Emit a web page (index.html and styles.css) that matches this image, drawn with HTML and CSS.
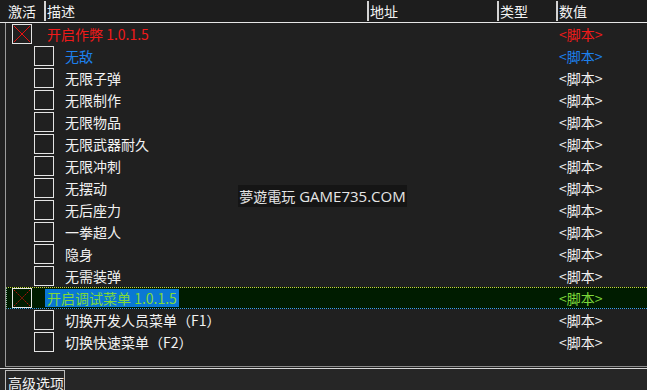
FILE: index.html
```html
<!DOCTYPE html>
<html lang="zh-CN">
<head>
<meta charset="UTF-8">
<title>Cheat Table</title>
<link rel="stylesheet" href="styles.css">
</head>
<body>

<div class="app">
  <div class="header">
    <div class="hcell first">激活</div>
    <div class="hcell">描述</div>
    <div class="hcell">地址</div>
    <div class="hcell">类型</div>
    <div class="hcell last">数值</div>
  </div>

  <div class="list">
    <div class="row parent">
      <div class="desc">
        <span class="box"><svg viewBox="0 0 20 20"><line x1="1" y1="1" x2="19" y2="19"/><line x1="19" y1="1" x2="1" y2="19"/></svg></span>
        <span class="label red">开启作弊 1.0.1.5</span>
      </div>
      <div class="value red">&lt;脚本&gt;</div>
    </div>
    <div class="row child">
      <div class="desc"><span class="box"></span><span class="label blue">无敌</span></div>
      <div class="value blue">&lt;脚本&gt;</div>
    </div>
    <div class="row child">
      <div class="desc"><span class="box"></span><span class="label">无限子弹</span></div>
      <div class="value">&lt;脚本&gt;</div>
    </div>
    <div class="row child">
      <div class="desc"><span class="box"></span><span class="label">无限制作</span></div>
      <div class="value">&lt;脚本&gt;</div>
    </div>
    <div class="row child">
      <div class="desc"><span class="box"></span><span class="label">无限物品</span></div>
      <div class="value">&lt;脚本&gt;</div>
    </div>
    <div class="row child">
      <div class="desc"><span class="box"></span><span class="label">无限武器耐久</span></div>
      <div class="value">&lt;脚本&gt;</div>
    </div>
    <div class="row child">
      <div class="desc"><span class="box"></span><span class="label">无限冲刺</span></div>
      <div class="value">&lt;脚本&gt;</div>
    </div>
    <div class="row child">
      <div class="desc"><span class="box"></span><span class="label">无摆动</span></div>
      <div class="value">&lt;脚本&gt;</div>
    </div>
    <div class="row child">
      <div class="desc"><span class="box"></span><span class="label">无后座力</span></div>
      <div class="value">&lt;脚本&gt;</div>
    </div>
    <div class="row child">
      <div class="desc"><span class="box"></span><span class="label">一拳超人</span></div>
      <div class="value">&lt;脚本&gt;</div>
    </div>
    <div class="row child">
      <div class="desc"><span class="box"></span><span class="label">隐身</span></div>
      <div class="value">&lt;脚本&gt;</div>
    </div>
    <div class="row child">
      <div class="desc"><span class="box"></span><span class="label">无需装弹</span></div>
      <div class="value">&lt;脚本&gt;</div>
    </div>
    <div class="row parent selected">
      <div class="desc">
        <span class="box"><svg viewBox="0 0 20 20"><line class="dash" x1="1" y1="1" x2="19" y2="19"/><line class="dash" x1="19" y1="1" x2="1" y2="19"/></svg></span>
        <span class="label green sel-text">开启调试菜单 1.0.1.5</span>
      </div>
      <div class="value green">&lt;脚本&gt;</div>
    </div>
    <div class="row child">
      <div class="desc"><span class="box"></span><span class="label">切换开发人员菜单（F1）</span></div>
      <div class="value">&lt;脚本&gt;</div>
    </div>
    <div class="row child">
      <div class="desc"><span class="box"></span><span class="label">切换快速菜单（F2）</span></div>
      <div class="value">&lt;脚本&gt;</div>
    </div>
  </div>

  <div class="bottom">
    <div class="tab">高级选项</div>
  </div>

  <!-- site watermark laid over the list -->
  <div class="watermark"><span class="tc">夢遊電玩</span> GAME735.COM</div>
</div>

</body>
</html>
```

FILE: styles.css
```css
/* dark cheat table list */
body {
  margin: 0;
  padding: 0;
  background-color: #202020;
  font-family: "Noto Sans CJK SC", "Noto Sans", sans-serif;
  color: #f2f2f2;
}
.app {
  position: relative;
  width: 647px;
  height: 390px;
  overflow: hidden;
  display: flex;
  flex-direction: column;
}

/* column header */
.header {
  display: grid;
  grid-template-columns: 46px 323px 130px 59px 1fr;
  height: 22px;
  border-bottom: 1px solid #e6e6e6;
  background-color: #1d1d1d;
}
.hcell {
  box-sizing: border-box;
  border-right: 2px solid #d4d4d4;
  margin: 1px 0 1px 0;
  padding-left: 1px;
  font-size: 14px;
  line-height: 20px;
  white-space: nowrap;
}
.hcell.first {
  padding-left: 8px;
}
.hcell.last {
  border-right: none;
}

/* rows */
.list {
  height: 350px;
  margin-left: 5px;
  border-left: 1px solid #9c9c9c;
  border-bottom: 1px solid #8c8c8c;
}
.row {
  display: grid;
  grid-template-columns: 552px 1fr;
  height: 22px;
  box-sizing: border-box;
  border: 1px solid transparent;
  border-right: none;
  font-size: 14px;
  line-height: 20px;
}
.desc {
  display: flex;
  align-items: center;
  white-space: nowrap;
}
.row.parent .desc {
  padding-left: 5px;
  gap: 15px;
}
.row.child .desc {
  padding-left: 27px;
  gap: 11px;
}
.value {
  padding-left: 0;
  white-space: nowrap;
}
.box {
  display: block;
  width: 20px;
  height: 20px;
  box-sizing: border-box;
  border: 1px solid #e4e4e4;
}
.box svg {
  display: block;
  width: 18px;
  height: 18px;
}
.box line {
  stroke: #ff1010;
  stroke-width: 1;
}
.box line.dash {
  stroke-dasharray: 1.5 1.5;
}

.red { color: #f01a1a; }
.blue { color: #1d80ee; }
.green { color: #7ed83a; }

/* focused row */
.row.selected {
  background-color: #001c00;
  border-top: 1px dotted #c9d43c;
  border-bottom: 1px dotted #3f98f0;
  border-left: 1px dotted #8fb8a0;
}
.sel-text {
  margin-left: -2px;
  padding: 0 2px;
  line-height: 18px;
  background-color: #0a78d4;
}

/* lower panel */
.bottom {
  flex: 1;
  margin-top: 1px;
  border-top: 1px solid #d8d8d8;
  background-color: #262626;
  padding-left: 5px;
}
.tab {
  width: 60px;
  margin-top: 1px;
  box-sizing: border-box;
  border: 1px solid #bdbdbd;
  border-bottom: none;
  padding: 2px 0 0 2px;
  height: 20px;
  font-size: 14px;
  line-height: 20px;
  white-space: nowrap;
  overflow: hidden;
}

.watermark {
  position: absolute;
  left: 238px;
  top: 185px;
  width: 169px;
  height: 22px;
  background-color: #151515;
  color: #e6e6e6;
  font-family: "Open Sans", "Noto Sans CJK TC", sans-serif;
  font-size: 15px;
  line-height: 22px;
  text-align: center;
  white-space: nowrap;
}
.watermark .tc {
  font-family: "Noto Sans CJK TC", sans-serif;
  font-size: 14px;
}
```
